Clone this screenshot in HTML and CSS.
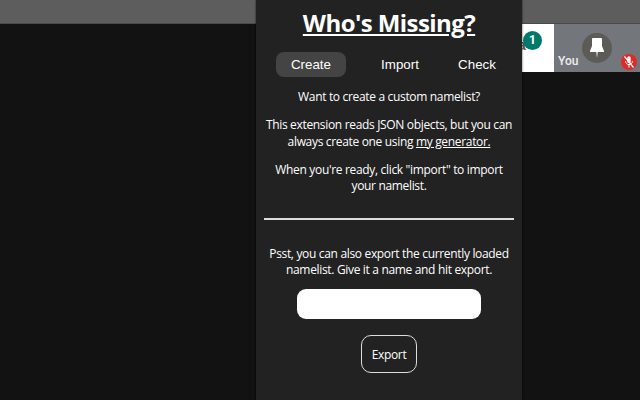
FILE: index.html
```html
<!DOCTYPE html>
<html lang="en">
<head>
<meta charset="utf-8">
<title>Who's Missing?</title>
<link rel="stylesheet" href="styles.css">
</head>
<body>
<div class="meet">
  <div class="topbar"></div>
  <div class="strip">
    <div class="tile-white">
      <span class="tile-glyph">a</span>
      <span class="badge">1</span>
    </div>
    <div class="tile-you">
      <span class="you">You</span>
      <span class="avatar">
        <svg width="16" height="22" viewBox="0 0 16 22"><path d="M4 1h8a1 1 0 0 1 1 1v7l2 5v1H8.7L8 21l-.7-6H1v-1l2-5V2a1 1 0 0 1 1-1z" fill="#fff"/></svg>
      </span>
      <span class="mic">
        <svg width="12" height="14" viewBox="0 0 12 14"><path d="M6 1.2a1.7 1.7 0 0 1 1.7 1.7v3.6a1.7 1.7 0 0 1-3.4 0V2.9A1.7 1.7 0 0 1 6 1.2z" fill="#fff"/><path d="M2.6 6.2c0 2 1.4 3.4 3.4 3.4s3.4-1.4 3.4-3.4M6 9.6v3" fill="none" stroke="#fff" stroke-width="1"/><path d="M1.5 1.5l9 11" stroke="#fff" stroke-width="1.2"/></svg>
      </span>
    </div>
  </div>
</div>
<main class="panel">
  <h1 class="title">Who's Missing?</h1>
  <nav class="tabs">
    <span class="tab tab-create">Create</span>
    <span class="tab tab-import">Import</span>
    <span class="tab tab-check">Check</span>
  </nav>
  <p class="para first">Want to create a custom namelist?</p>
  <p class="para">This extension reads JSON objects, but you can always create one using <a class="link" href="#">my generator.</a></p>
  <p class="para">When you're ready, click "import" to import your namelist.</p>
  <hr class="rule">
  <p class="para">Psst, you can also export the currently loaded namelist. Give it a name and hit export.</p>
  <input class="name-input" type="text" aria-label="Namelist name">
  <button class="export" type="button">Export</button>
</main>
</body>
</html>
```
FILE: styles.css
```css
* { box-sizing: border-box; }
html, body { margin: 0; height: 100%; overflow: hidden; }
body { background: #121212; position: relative; font-family: "Open Sans", "Noto Sans", sans-serif; }
.meet { display: flex; flex-direction: column; height: 100%; }
.topbar { height: 24px; background: #5d5d5d; border-bottom: 1px solid #4a4a4a; }
.strip { display: flex; justify-content: flex-end; height: 48px; }
.tile-white { width: 32px; background: #fff; position: relative; overflow: hidden; }
.tile-glyph { position: absolute; left: -4px; top: 13px; font: bold 14px/16px "Liberation Sans", sans-serif; color: #555; }
.badge { position: absolute; left: 1px; top: 7px; width: 19px; height: 19px; border-radius: 50%; background: #00796b; color: #fff; font: bold 12px/19px Roboto, sans-serif; text-align: center; }
.tile-you { width: 86px; background: #73767b; position: relative; }
.you { position: absolute; left: 4px; bottom: 4px; font: 500 12px/14px Roboto, sans-serif; color: #eee; }
.avatar { position: absolute; left: 28px; top: 9px; width: 30px; height: 30px; border-radius: 50%; background: #5c5b55; display: flex; align-items: center; justify-content: center; }
.mic { position: absolute; left: 67px; top: 30px; width: 16px; height: 16px; border-radius: 50%; background: #e02b26; display: flex; align-items: center; justify-content: center; }
.panel { position: absolute; left: 256px; top: 0; width: 266px; height: 400px; background: #222; color: #fff; padding: 0 8px; text-align: center; box-shadow: 0 0 2px rgba(0,0,0,.7); }
.title { margin: 6px 0 0; font-size: 24px; line-height: 33px; font-weight: 700; letter-spacing: -.57px; text-decoration: underline; }
.tabs { display: flex; align-items: center; margin: 13px 0 0 12px; height: 25px; }
.tab { font: 13.33px/25px "Liberation Sans", Arial, sans-serif; height: 25px; border-radius: 8px; }
.tab-create { width: 70px; background: #444; }
.tab-import { width: 70px; margin-left: 19px; }
.tab-check { width: 64px; margin-left: 10px; }
.para { margin: 0 0 11.5px; font-size: 12px; line-height: 16.5px; letter-spacing: -.33px; }
.first { margin-top: 12px; }
.link { color: #fff; text-decoration: underline; }
.rule { height: 2px; border: 0; background: #ddd; margin: 23px 0 26px; }
.name-input { display: block; width: 184px; height: 30px; margin: -1px auto 0; border: 0; border-radius: 9px; background: #fff; }
.export { display: block; width: 56px; height: 38px; margin: 16px auto 0; background: transparent; color: #fff; border: 1px solid #ddd; border-radius: 10px; font: 12px "Open Sans", sans-serif; letter-spacing: -.33px; padding: 0; }
```
